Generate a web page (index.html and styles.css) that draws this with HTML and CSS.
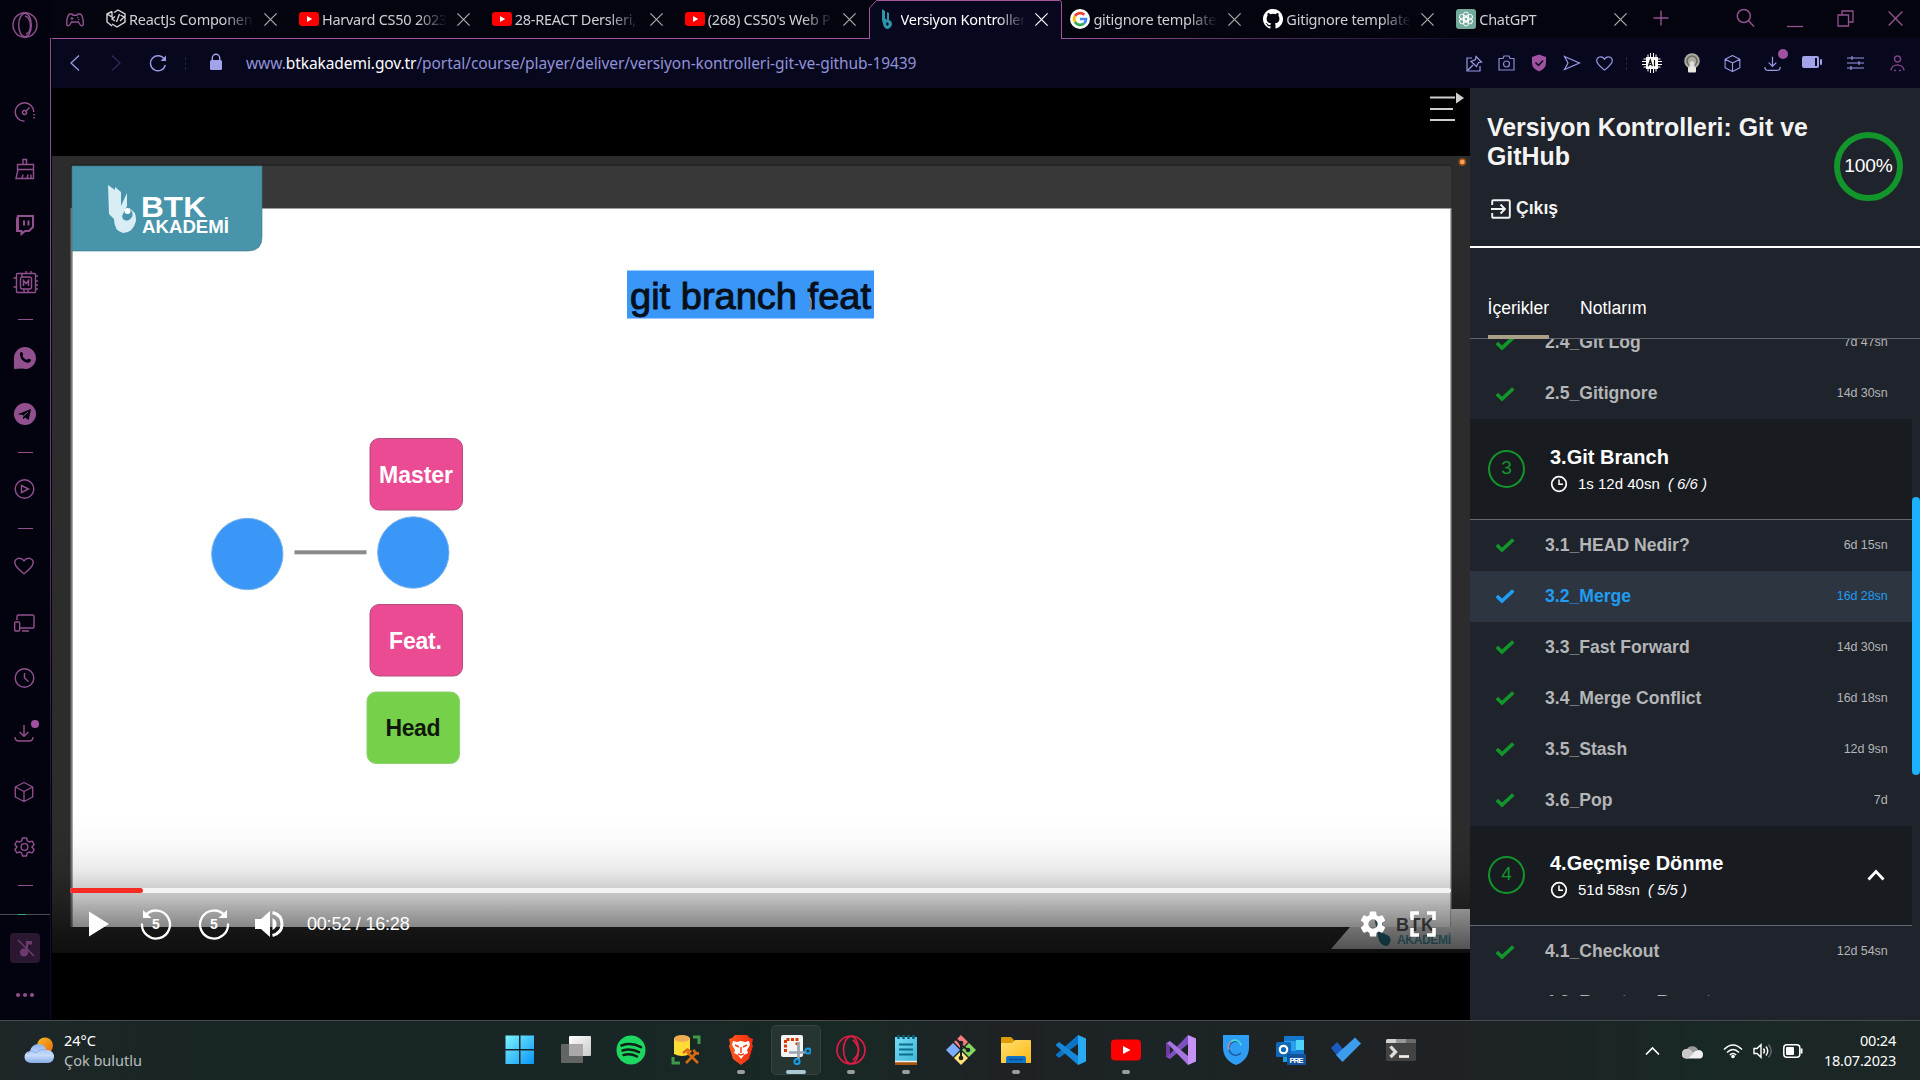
FILE: index.html
```html
<!DOCTYPE html>
<html lang="tr">
<head>
<meta charset="utf-8">
<title>Versiyon Kontrolleri: Git ve GitHub</title>
<link rel="stylesheet" href="styles.css">
</head>
<body>
<svg class="defs" aria-hidden="true">
  <defs>
    <linearGradient id="gWin" x1="0" y1="0" x2="1" y2="1"><stop offset="0" stop-color="#7df3ff"/><stop offset="1" stop-color="#0a95f5"/></linearGradient>
    <linearGradient id="gView" x1="0" y1="0" x2="1" y2="1"><stop offset="0" stop-color="#fff"/><stop offset="1" stop-color="#c9c9c9"/></linearGradient>
    <linearGradient id="gSun" x1="0" y1="0" x2="1" y2="1"><stop offset="0" stop-color="#f7b928"/><stop offset="1" stop-color="#ea6a0c"/></linearGradient>
    <linearGradient id="gCloud" x1="0" y1="0" x2="0" y2="1"><stop offset="0" stop-color="#8fb4f0"/><stop offset=".6" stop-color="#c8dcfa"/><stop offset="1" stop-color="#86a9e6"/></linearGradient>
    <linearGradient id="gBrave" x1="0" y1="0" x2="1" y2="0"><stop offset="0" stop-color="#ff5a22"/><stop offset="1" stop-color="#f02a0c"/></linearGradient>
    <linearGradient id="gFolder" x1="0" y1="0" x2="1" y2="1"><stop offset="0" stop-color="#ffdf70"/><stop offset="1" stop-color="#fdb913"/></linearGradient>
    <linearGradient id="gNote" x1="0" y1="0" x2="1" y2="1"><stop offset="0" stop-color="#77dcf3"/><stop offset="1" stop-color="#3cb4d8"/></linearGradient>
  </defs>
  <symbol id="x" viewBox="0 0 16 16"><path d="M1.5 1.5l13 13M14.500 1.500l-13 13" fill="none" stroke="currentColor" stroke-width="1.3"/></symbol>
  <symbol id="yt" viewBox="0 0 20 20"><rect y="3" width="20" height="14" rx="3.200" fill="#f00"/><path d="M8 7l5.200 3L8 13z" fill="#fff"/></symbol>
  <symbol id="check" viewBox="0 0 20 16"><path d="M1.800 8l5.200 5L18.300 2.500" fill="none" stroke="currentColor" stroke-width="3.700"/></symbol>
  <symbol id="clock" viewBox="0 0 18 18"><circle cx="9" cy="9" r="7.300" fill="none" stroke="#fff" stroke-width="1.700"/><path d="M9 4.500V9.200H13" fill="none" stroke="#fff" stroke-width="1.500"/></symbol>
  <symbol id="cube" viewBox="0 0 20 22"><path d="M10 1.500l8.700 4.500v10L10 20.500 1.300 16V6zM1.300 6L10 10.500 18.700 6M10 10.500v10" fill="none" stroke="currentColor" stroke-width="1.300" stroke-linejoin="round"/></symbol>
  <symbol id="download" viewBox="0 0 20 20"><path d="M10 2v11M5.500 9l4.500 4.300L14.500 9M1 14q0 4 4 4h10q4 0 4-4" fill="none" stroke="currentColor" stroke-width="1.400"/></symbol>
  <symbol id="heart" viewBox="0 0 20 18"><path d="M10 16.800C5 13 .8 9.600.8 5.600.8 1 7 -.6 10 3.800 13 -.6 19.200 1 19.200 5.600c0 4-4.200 7.400-9.200 11.200z" fill="none" stroke="currentColor" stroke-width="1.400"/></symbol>
</svg>

<div class="browser">
  <nav class="sidebar">
    <svg class="ic" width="26" height="30" viewBox="0 0 26 30"><g fill="none" stroke="#93508f" stroke-width="1.400"><ellipse cx="13" cy="15" rx="12" ry="12.300"/><ellipse cx="13" cy="15" rx="6.300" ry="11.800"/><path d="M13 6c7 2 7 16 1 18"/></g></svg>
    <svg class="ic" width="22" height="30" viewBox="0 0 22 30"><g fill="none" stroke="#93508f" stroke-width="1.500"><path d="M10.500 24.300A9.300 9.300 0 1 1 19.800 15"/><circle cx="10.500" cy="15.500" r="2"/><path d="M12 14l3.500-3.500"/><path d="M20 17v5" stroke-dasharray="1.500 1.500"/></g></svg>
    <svg class="ic" width="22" height="30" viewBox="0 0 22 30"><path d="M9 10.500V5.500h3.500v5M3.500 10.500h16v5H3.500zM4 15.500L2 24.500h17.500v-9M8 24.500l1-4M13 24.500l1-4M17 24.500v-4" fill="none" stroke="#93508f" stroke-width="1.400"/></svg>
    <svg class="ic" width="22" height="30" viewBox="0 0 22 30"><path d="M4 6h15v11l-4 4h-4l-3.500 3v-3H3V9z" fill="none" stroke="#93508f" stroke-width="2"/><path d="M3 9v11h2V7z" fill="#93508f"/><path d="M10 10.500v5M14.500 10.500v5" stroke="#93508f" stroke-width="2"/></svg>
    <svg class="ic wide" width="26" height="30" viewBox="0 0 26 30"><g fill="none" stroke="#93508f" stroke-width="1.400"><rect x="3.500" y="5.500" width="19" height="19" rx="1"/><rect x="7.500" y="9" width="11" height="12" rx="2"/><path d="M.5 10h3M.5 19h3M22.500 8h2.500M22.500 13h2.500M22.500 17h2.500M22.500 21h2.500M13 5.500V3M18 5.500V3M11 21v3.500M15 21v3.500M9 9V5.500"/><path d="M10.500 18v-5.500l2.500 3 2.500-3V18" stroke-width="1.500"/></g></svg>
    <i class="dash"></i>
    <svg class="ic" width="22" height="30" viewBox="0 0 22 30"><path d="M11 4a11 11 0 1 1-3 21.600L0 26V15A11 11 0 0 1 11 4z" fill="#93508f"/><path d="M6 10c1-1.600 2.500-1 3 .8.4 1.400-.6 1.700-.3 2.500.8 1.700 2 2.700 3.700 3.400.9.300 1.300-1.300 2.500-.9 2.500.8 2.500 1.500 1.600 2.800-2.500 3.400-11.500-1-10.500-8.600z" fill="#03030f"/></svg>
    <svg class="ic" width="22" height="30" viewBox="0 0 22 30"><circle cx="11" cy="15" r="11" fill="#93508f"/><path d="M3.500 15.200L17 10l-2.300 11-3.700-2.500-2 1.800V16z" fill="#03030f"/><path d="M9 17.500l5-4.500" stroke="#93508f"/></svg>
    <i class="dash"></i>
    <svg class="ic" width="22" height="30" viewBox="0 0 22 30"><circle cx="10.500" cy="15" r="9.300" fill="none" stroke="#93508f" stroke-width="1.400"/><path d="M7.500 11.500v7l7-3.500z" fill="none" stroke="#93508f" stroke-width="1.400"/></svg>
    <i class="dash"></i>
    <span class="ic box"><svg width="20" height="18"><use href="#heart"/></svg></span>
    <svg class="ic" width="22" height="30" viewBox="0 0 22 30"><path d="M3 12V8.500q0-1.500 1.500-1.500h14q1.500 0 1.500 1.500v10.500q0 1-1 1H6M8 23h7" fill="none" stroke="#93508f" stroke-width="1.400"/><rect x=".7" y="14" width="5" height="9" rx="1" fill="none" stroke="#93508f" stroke-width="1.400"/></svg>
    <svg class="ic" width="22" height="30" viewBox="0 0 22 30"><circle cx="10.500" cy="15" r="9.300" fill="none" stroke="#93508f" stroke-width="1.400"/><path d="M10.500 10v5l4 3.500" fill="none" stroke="#93508f" stroke-width="1.400"/></svg>
    <span class="ic box"><svg width="20" height="20"><use href="#download"/></svg><b class="dot"></b></span>
    <span class="ic box"><svg width="20" height="22"><use href="#cube"/></svg></span>
    <svg class="ic" width="22" height="30" viewBox="0 0 22 30"><path d="M8.500 6h4l.8 2.900 2 1.100 2.900-.9 1.900 3.400-2.200 2.500 2.200 2.500-1.900 3.400-2.900-.9-2 1.100-.8 2.900h-4l-.8-2.900-2-1.100-2.900.9L.9 17.500 3 15 .9 12.500l1.900-3.400 2.900.9 2-1.100z" fill="none" stroke="#93508f" stroke-width="1.400" stroke-linejoin="round"/><circle cx="10.500" cy="15" r="3.400" fill="none" stroke="#93508f" stroke-width="1.400"/></svg>
    <i class="dash"></i>
    <i class="divider"></i>
    <span class="muted"><svg width="30" height="30" viewBox="0 0 30 30"><circle cx="14" cy="19.500" r="4" fill="#6d3a6d"/><path d="M16 8h6v3.500h-4v8h-2z" fill="#6d3a6d"/><path d="M8 7l16 16" stroke="#6d3a6d" stroke-width="1.600"/></svg></span>
    <svg class="ic" width="22" height="30" viewBox="0 0 22 30"><g fill="#93508f"><circle cx="4" cy="15" r="2"/><circle cx="11" cy="15" r="2"/><circle cx="18" cy="15" r="2"/></g></svg>
  </nav>
  <i class="edge"></i>

  <div class="window">
    <header class="tabs">
      <span class="pad"><svg width="18" height="14" viewBox="0 0 18 14"><path d="M4 1h2l1 1.200h4L12 1h2c2 0 3.300 5 3.300 9.500 0 3-2.500 3-3.800.2l-1-1.700h-7l-1 1.700C3.200 13.500.7 13.500.7 10.500.7 6 2 1 4 1z" fill="none" stroke="#93508f" stroke-width="1.400"/><path d="M4.500 5.500h3M6 4v3M11 4.500h1.500M12 6.500h1.500" stroke="#93508f" stroke-width="1.200"/></svg></span>
      <div class="tab"><svg width="20" height="20" viewBox="0 0 20 20"><path d="M6 2.500L1 5v8l5 4M1 5l5 3V2.500M8 3.500l4-2.500 7 4v8l-8 5-5-3M9 12l-3-2 3-2.500M10.500 13l3-8M14.500 6l3.500 2-4 4" fill="none" stroke="#d8d8d8" stroke-width="1.400"/></svg><span class="name">ReactJs Components</span><svg class="close" width="15" height="15"><use href="#x"/></svg></div>
      <div class="tab"><svg width="20" height="20"><use href="#yt"/></svg><span class="name">Harvard CS50 2023</span><svg class="close" width="15" height="15"><use href="#x"/></svg></div>
      <div class="tab"><svg width="20" height="20"><use href="#yt"/></svg><span class="name">28-REACT Dersleri, R</span><svg class="close" width="15" height="15"><use href="#x"/></svg></div>
      <div class="tab"><svg width="20" height="20"><use href="#yt"/></svg><span class="name">(268) CS50's Web Pr</span><svg class="close" width="15" height="15"><use href="#x"/></svg></div>
      <div class="tab active"><svg class="shape" width="193" height="39" viewBox="0 0 193 39"><path d="M.5 39V8L7.500.5H190.500q2 0 2 2V39" fill="#07071e" stroke="#a4559d"/></svg><svg width="20" height="20" viewBox="0 0 20 20"><path d="M4 0l3 2v7l2 2V3l2 1v7q3 1 3 4t-4 5q-4 0-5-5l-1-4z" fill="#2f93a9"/><path d="M9 13l2 2-2 2-1-2z" fill="#07071e"/></svg><span class="name">Versiyon Kontrolleri</span><svg class="close" width="15" height="15"><use href="#x"/></svg></div>
      <div class="tab"><svg width="20" height="20" viewBox="0 0 20 20"><circle cx="10" cy="10" r="10" fill="#fff"/><g fill="none" stroke-width="2.700"><path d="M5 7A6 6 0 0 1 14.300 5.700" stroke="#ea4335"/><path d="M5 13A6 6 0 0 1 5 7" stroke="#fbbc05"/><path d="M14 14.500A6 6 0 0 1 5 13" stroke="#34a853"/><path d="M10 10h6q0 3-2 4.500" stroke="#4285f4"/></g></svg><span class="name">gitignore templates</span><svg class="close" width="15" height="15"><use href="#x"/></svg></div>
      <div class="tab"><svg width="20" height="20" viewBox="0 0 16 16"><path fill="#fff" d="M8 0C3.580 0 0 3.580 0 8c0 3.540 2.290 6.530 5.470 7.590.4.070.55-.17.55-.38 0-.19-.01-.82-.01-1.490-2.010.37-2.530-.49-2.690-.94-.09-.23-.48-.94-.82-1.130-.28-.15-.68-.52-.01-.53.630-.01 1.080.58 1.230.820.720 1.210 1.870.870 2.330.660.070-.52.280-.87.510-1.070-1.780-.2-3.640-.89-3.640-3.950 0-.87.310-1.590.820-2.150-.08-.2-.36-1.020.080-2.120 0 0 .67-.21 2.200.820a7.600 7.600 0 0 1 4 0c1.530-1.040 2.200-.82 2.200-.820.440 1.100.160 1.920.080 2.120.510.560.820 1.270.820 2.150 0 3.070-1.870 3.750-3.650 3.950.290.250.540.730.540 1.480 0 1.070-.01 1.930-.01 2.200 0 .21.150.460.550.380A8 8 0 0 0 8 0z"/></svg><span class="name">Gitignore templates</span><svg class="close" width="15" height="15"><use href="#x"/></svg></div>
      <div class="tab"><svg width="20" height="20" viewBox="0 0 20 20"><rect width="20" height="20" rx="3" fill="#74aa9c"/><g fill="none" stroke="#fff" stroke-width=".9"><rect x="7.500" y="3" width="5" height="9" rx="2.500"/><rect x="7.500" y="3" width="5" height="9" rx="2.500" transform="rotate(60 10 10)"/><rect x="7.500" y="3" width="5" height="9" rx="2.500" transform="rotate(120 10 10)"/><rect x="7.500" y="3" width="5" height="9" rx="2.500" transform="rotate(180 10 10)"/><rect x="7.500" y="3" width="5" height="9" rx="2.500" transform="rotate(240 10 10)"/><rect x="7.500" y="3" width="5" height="9" rx="2.500" transform="rotate(300 10 10)"/></g></svg><span class="name">ChatGPT</span><svg class="close" width="15" height="15"><use href="#x"/></svg></div>
      <span class="wc plus"><svg width="16" height="16" viewBox="0 0 16 16"><path d="M8 .5v15M.5 8h15" stroke="#93508f" stroke-width="1.400"/></svg></span>
      <span></span>
      <span class="wc"><svg width="19" height="20" viewBox="0 0 19 20"><circle cx="7.800" cy="8" r="6.500" fill="none" stroke="#93508f" stroke-width="1.500"/><path d="M12.500 12.700l5.500 5.800" stroke="#93508f" stroke-width="1.500"/></svg></span>
      <span class="wc"><svg width="16" height="20" viewBox="0 0 16 20"><path d="M0 18.500h16" stroke="#93508f" stroke-width="1.300"/></svg></span>
      <span class="wc"><svg width="17" height="17" viewBox="0 0 17 17"><path d="M1 5h10.500v11H1zM5 5V1h11v11h-4.500" fill="none" stroke="#93508f" stroke-width="1.300"/></svg></span>
      <span class="wc"><svg class="exit" width="17" height="17"><use href="#x"/></svg></span>
    </header>

    <div class="address">
      <span><svg width="11" height="18" viewBox="0 0 11 18"><path d="M10 1.500L2 9l8 7.500" fill="none" stroke="#9a9ae8" stroke-width="1.300"/></svg></span>
      <span><svg width="11" height="18" viewBox="0 0 11 18"><path d="M1 1.500L9 9l-8 7.500" fill="none" stroke="#2d2b56" stroke-width="1.300"/></svg></span>
      <span><svg width="18" height="18" viewBox="0 0 18 18"><path d="M15.500 5.500A7.500 7.500 0 1 0 16.300 11" fill="none" stroke="#9a9ae8" stroke-width="1.400"/><path d="M17 1.500v5.500h-5.500z" fill="#9a9ae8"/></svg></span>
      <span class="dots"></span>
      <span class="lock"><svg width="14" height="18" viewBox="0 0 14 18"><rect x="1" y="7" width="12" height="10" rx="1.500" fill="#a3a3ea"/><path d="M3.300 8V5a3.700 3.700 0 0 1 7.400 0v3" fill="none" stroke="#a3a3ea" stroke-width="1.400"/></svg></span>
      <p class="url">www.<b>btkakademi.gov.tr</b>/portal/course/player/deliver/versiyon-kontrolleri-git-ve-github-19439</p>
      <div class="tools">
        <span><svg width="17" height="17" viewBox="0 0 17 17"><path d="M6 3H1v13h13v-5M2 15l5-5M10 1.500l5.500 5.500-3 .5-2 4-5.500-5 4.500-2z" fill="none" stroke="#9a9ae8" stroke-width="1.200"/></svg></span>
        <span><svg width="17" height="16" viewBox="0 0 17 16"><path d="M1 3.500h4l1-2.500h5l1 2.500h4V15H1z" fill="none" stroke="#8c8cd6" stroke-width="1.200"/><circle cx="8.500" cy="9" r="3" fill="none" stroke="#8c8cd6" stroke-width="1.200"/></svg></span>
        <span><svg width="16" height="18" viewBox="0 0 16 18"><path d="M8 .5l7 2.500v6q0 5.500-7 8.500-7-3-7-8.500V3z" fill="#a052a0"/><path d="M4.500 8.500l3 3 4.500-5" fill="none" stroke="#07071e" stroke-width="1.500"/></svg></span>
        <span><svg width="18" height="16" viewBox="0 0 18 16"><path d="M1.500 1.500L16.500 8l-15 6.500L5 8z" fill="none" stroke="#9a9ae8" stroke-width="1.200"/></svg></span>
        <span class="lav"><svg width="17" height="17"><use href="#heart"/></svg></span>
        <span class="dots"></span>
        <span><svg width="20" height="20" viewBox="0 0 20 20"><rect x="4" y="4" width="12" height="12" fill="#fff"/><path d="M6 1.500v17M8.500 0v20M11.500 0v20M14 1.500v17M1.500 6h17M0 8.500h20M0 11.500h20M1.500 14h17" stroke="#fff"/><path d="M6.300 13.300L8.300 7l2 6.300M7 11.500h2.600M12.500 7v6.300" fill="none" stroke="#111" stroke-width="1.200"/></svg></span>
        <span><svg width="18" height="20" viewBox="0 0 18 20"><circle cx="9" cy="8" r="7.800" fill="#a9a9a0"/><circle cx="9" cy="8" r="5" fill="none" stroke="#66665f" stroke-width="1.500"/><path d="M6.500 10q2.500-4 5 0v5h-5z" fill="#ddd"/><rect x="5" y="14" width="8" height="5.500" rx="1" fill="#e8e8e0"/></svg></span>
        <span class="lav"><svg width="17" height="19"><use href="#cube"/></svg></span>
        <span class="lav rel"><svg width="17" height="17"><use href="#download"/></svg><b class="dot"></b></span>
        <span class="bat"><svg width="20" height="12" viewBox="0 0 20 12"><rect width="17" height="12" rx="2" fill="#a3a3ea"/><rect x="13" y="2" width="2" height="8" fill="#07071e"/><rect x="18" y="3" width="2" height="6" rx="1" fill="#a3a3ea"/></svg></span>
        <span><svg width="17" height="16" viewBox="0 0 17 16"><path d="M0 3h17M0 8h17M0 13h17M5 1v4M12 6v4M4 11v4" stroke="#9a9ae8" stroke-width="1.100"/></svg></span>
        <span><svg width="15" height="17" viewBox="0 0 15 17"><g fill="none" stroke="#7c4080" stroke-width="1.500"><circle cx="7.500" cy="4" r="3"/><path d="M1 15.500C1.500 8 13.500 8 14 15.500M4 15.500h2M9 15.500h2"/></g></svg></span>
      </div>
    </div>

    <div class="content">
      <main class="player">
        <div class="top"><svg width="40" height="30" viewBox="0 0 40 30"><path d="M2 4.500h25M2 16h23M2 27h25" stroke="#cfcfcf" stroke-width="2.200" transform="translate(0 1)"/><path d="M28 0l8 5.500L28 11z" fill="#cfcfcf" transform="translate(0 .5)"/></svg></div>
        <div class="frame">
          <svg class="slide" width="1418" height="797" viewBox="52 156 1418 797">
            <rect x="52" y="156" width="1418" height="797" fill="#2c2c2c"/>
            <rect x="70" y="164" width="1382" height="4" fill="#262626"/>
            <rect x="72" y="166" width="1379" height="43" fill="#383838"/>
            <rect x="70.500" y="208" width="2" height="719" fill="#777"/>
            <rect x="1450" y="208" width="2" height="719" fill="#666"/>
            <rect x="72.500" y="208.500" width="1378" height="718.500" fill="#fff"/>
            <path d="M72 166h190v71q0 14-14 14H72z" fill="#4794ab" stroke="#3d7587" stroke-opacity=".6"/>
            <circle cx="1462.300" cy="162" r="3.200" fill="#f5a25e" stroke="#8a4718" stroke-width="1.500"/>
            <path d="M108 185l7 5v-3l6 5v14l6-13v14q10 4 9 14-3 12-13 12-9-2-9-14l-5-5z" fill="#d9eef4"/>
            <path d="M127 206l4 4q4 6-2 10-6 2-7-4z" fill="#4794ab"/><circle cx="127.500" cy="211" r="3" fill="#fff"/>
            <text class="brand" x="141" y="216.500" font-size="30" textLength="65" lengthAdjust="spacingAndGlyphs">BTK</text>
            <text class="brand" x="142" y="233" font-size="18" textLength="87" lengthAdjust="spacingAndGlyphs">AKADEMİ</text>
            <rect x="627" y="270.500" width="247" height="48" fill="#3b97f7"/>
            <text x="630" y="309" font-size="37.500" textLength="241" lengthAdjust="spacingAndGlyphs" fill="#08101c" stroke="#08101c" stroke-width="1">git branch feat</text>
            <path d="M809 297q2 1 2 4v6q0 3-2 4" stroke="#9b9b9b" stroke-width="1.500" fill="none"/>
            <g stroke="#b44c7c"><rect x="370" y="438.500" width="92.500" height="71.500" rx="9" fill="#ea4b93"/><rect x="370" y="604.500" width="92.500" height="71.500" rx="9" fill="#ea4b93"/></g>
            <rect x="367" y="692" width="92.500" height="71.500" rx="9" fill="#76d14a" stroke="#8fcf75"/>
            <g fill="#3b97f7" stroke="#79b4ee"><circle cx="247.300" cy="554" r="35.700"/><circle cx="413.300" cy="552.500" r="35.700"/></g>
            <rect x="294.500" y="550.300" width="72" height="4" fill="#8a8a8a"/>
            <g class="label"><text x="416" y="483" textLength="74">Master</text><text x="415.500" y="649" textLength="53">Feat.</text><text class="dark" x="413" y="736" textLength="55">Head</text></g>
            <rect x="52" y="927" width="1418" height="26" fill="#2a2a2a"/>
            <path d="M1331 949l19-22h101v-18h19v40z" fill="#dcdcdc"/>
            <path d="M1374 916l9 5v12l6 3q4 5-2 10-7 0-9-9z" fill="#287488"/>
            <text x="1396" y="931" font-size="18" font-weight="700" fill="#555" textLength="38">BTK</text>
            <text x="1397" y="944" font-size="12" font-weight="700" fill="#4b97a8" textLength="54">AKADEMİ</text>
          </svg>
          <div class="controls">
            <div class="bar"><i class="played"></i></div>
            <div class="buttons">
              <svg width="20" height="26" viewBox="0 0 20 26"><path d="M0 .5L20 13 0 25.500z" fill="#fff"/></svg>
              <svg class="skip" width="32" height="32" viewBox="0 0 32 32"><path d="M5.500 7.200A14 14 0 1 1 2 15.500" fill="none" stroke="#fff" stroke-width="2.300"/><path d="M3 2v8h8.500z" fill="#fff"/><text x="16" y="21">5</text></svg>
              <svg class="skip" width="32" height="32" viewBox="0 0 32 32"><path d="M26.500 7.200A14 14 0 1 0 30 15.500" fill="none" stroke="#fff" stroke-width="2.300"/><path d="M29 2v8h-8.500z" fill="#fff"/><text x="16" y="21">5</text></svg>
              <svg class="vol" width="30" height="28" viewBox="0 0 30 28"><path d="M0 9h6l9-8v26l-9-8H0zM17.500 8q4 2 4 6t-4 6z" fill="#fff"/><path d="M17.500 2.500Q27 5 27 14t-9.500 11.500" fill="none" stroke="#fff" stroke-width="3"/></svg>
              <span class="time">00:52 / 16:28</span>
              <span class="grow"></span>
              <svg width="26" height="28" viewBox="2 2 20 20"><path fill="#fff" fill-rule="evenodd" d="M19.140 12.940c.04-.3.060-.61.060-.94 0-.32-.02-.64-.07-.94l2.030-1.580a.49.490 0 0 0 .12-.61l-1.920-3.320a.49.490 0 0 0-.59-.22l-2.390.96c-.5-.38-1.030-.7-1.620-.94l-.36-2.540a.48.480 0 0 0-.48-.41h-3.840c-.24 0-.43.170-.47.410l-.36 2.540c-.59.240-1.130.570-1.620.940l-2.390-.96a.48.480 0 0 0-.59.220L2.740 8.870c-.12.210-.08.470.12.610l2.030 1.580c-.05.300-.09.630-.09.940s.02.640.070.940l-2.030 1.580a.49.490 0 0 0-.12.610l1.920 3.320c.12.220.370.290.590.220l2.390-.96c.5.380 1.030.7 1.620.940l.36 2.540c.05.240.240.410.480.410h3.840c.24 0 .44-.17.470-.41l.36-2.540c.59-.24 1.130-.56 1.620-.94l2.390.96c.22.080.470 0 .59-.22l1.920-3.320a.48.480 0 0 0-.12-.61zM12 15.600a3.600 3.600 0 1 1 0-7.200 3.600 3.600 0 0 1 0 7.200z"/></svg>
              <svg class="full" width="26" height="26" viewBox="0 0 26 26"><path d="M2 9V2h7M17 2h7v7M24 17v7h-7M9 24H2v-7" fill="none" stroke="#fff" stroke-width="3.600"/></svg>
            </div>
          </div>
        </div>
      </main>

      <aside class="course">
        <div class="head">
          <div class="title">
            <h1>Versiyon Kontrolleri: Git ve GitHub</h1>
            <a class="exitlink"><svg width="20" height="20" viewBox="0 0 20 20"><path d="M1.200 6V2.500Q1.200 1.200 2.500 1.200h15q1.300 0 1.300 1.300v15q0 1.300-1.300 1.300h-15q-1.300 0-1.300-1.300V14M0 10h13M9.500 5.500L14 10l-4.500 4.500" fill="none" stroke="#f2f2f2" stroke-width="1.900"/></svg><span>Çıkış</span></a>
          </div>
          <div class="ring">100%</div>
        </div>
        <div class="nav"><span class="on">İçerikler</span><span>Notlarım</span></div>
        <div class="list">
          <div class="rows">
            <div class="row"><svg width="20" height="16"><use href="#check"/></svg><b>2.4_Git Log</b><em>7d 47sn</em></div>
            <div class="row"><svg width="20" height="16"><use href="#check"/></svg><b>2.5_Gitignore</b><em>14d 30sn</em></div>
            <div class="section"><span class="num">3</span><div><h2>3.Git Branch</h2><p><svg width="18" height="18"><use href="#clock"/></svg>1s 12d 40sn <i>( 6/6 )</i></p></div></div>
            <div class="row"><svg width="20" height="16"><use href="#check"/></svg><b>3.1_HEAD Nedir?</b><em>6d 15sn</em></div>
            <div class="row current"><svg width="20" height="16"><use href="#check"/></svg><b>3.2_Merge</b><em>16d 28sn</em></div>
            <div class="row"><svg width="20" height="16"><use href="#check"/></svg><b>3.3_Fast Forward</b><em>14d 30sn</em></div>
            <div class="row"><svg width="20" height="16"><use href="#check"/></svg><b>3.4_Merge Conflict</b><em>16d 18sn</em></div>
            <div class="row"><svg width="20" height="16"><use href="#check"/></svg><b>3.5_Stash</b><em>12d 9sn</em></div>
            <div class="row"><svg width="20" height="16"><use href="#check"/></svg><b>3.6_Pop</b><em>7d</em></div>
            <div class="section"><span class="num">4</span><div><h2>4.Geçmişe Dönme</h2><p><svg width="18" height="18"><use href="#clock"/></svg>51d 58sn <i>( 5/5 )</i></p></div><svg class="caret" width="18" height="12" viewBox="0 0 18 12"><path d="M1.500 10.500L9 2.500l7.500 8" fill="none" stroke="#fff" stroke-width="2.800"/></svg></div>
            <div class="row"><svg width="20" height="16"><use href="#check"/></svg><b>4.1_Checkout</b><em>12d 54sn</em></div>
            <div class="row"><svg width="20" height="16"><use href="#check"/></svg><b>4.2_Reset ve Revert</b></div>
          </div>
          <div class="track"><i class="thumb"></i></div>
        </div>
      </aside>
    </div>
  </div>
</div>

<footer class="taskbar">
  <div class="weather">
    <svg width="32" height="28" viewBox="0 0 32 28"><circle cx="21" cy="8.500" r="8" fill="url(#gSun)"/><path d="M7 26a6 6 0 0 1-1-12Q8 7 14.500 7q6 0 8 6a6.500 6.500 0 0 1 2 13z" fill="url(#gCloud)"/><path d="M3 17q4-5 9-1 5-5 10-3" fill="none" stroke="#7ba0e4" stroke-opacity=".7"/></svg>
    <p>24°C<br><span>Çok bulutlu</span></p>
  </div>
  <div class="apps">
    <span class="start"><svg width="30" height="30" viewBox="0 0 30 30"><path d="M.5.500H14v13.500H.5zM15.500.500H29v13.500H15.500zM.5 15.500H14V29H.5zM15.500 15.500H29V29H15.500z" fill="url(#gWin)"/></svg></span>
    <span><svg width="30" height="30" viewBox="0 0 30 30"><rect x="8" y="1" width="22" height="20" rx="1" fill="url(#gView)"/><rect y="9" width="22" height="19" rx="1" fill="#6c6c6c" opacity=".9"/><rect x="8" y="9" width="14" height="12" fill="#a9a9a9"/></svg></span>
    <span><svg width="30" height="30" viewBox="0 0 30 30"><circle cx="15" cy="15" r="14.500" fill="#1ed760"/><path d="M5.500 10.500q10-3.500 19.500 1.700M6.500 15.500q8.500-2.700 16.500 1.700M7.500 20q7-2 13.500 1.500" fill="none" stroke="#0f2018" stroke-width="2.500" stroke-linecap="round"/></svg></span>
    <span><svg width="30" height="30" viewBox="0 0 30 30"><path d="M3 3v16q8 4 16 0V3z" fill="#fddd35"/><ellipse cx="11" cy="3.500" rx="8" ry="3.500" fill="#f0ac55"/><path d="M22 2h6v7M2 22v6h7" fill="none" stroke="#3e9a48" stroke-width="3"/><path d="M15 28L24.500 18.500M12 18l4.500-3.500 4 2.500M16 17l11 11M23 14.500q0 4 5 4" fill="none" stroke="#d96a10" stroke-width="2.500"/></svg></span>
    <span class="run"><svg width="26" height="30" viewBox="0 0 26 30"><path d="M7 0h12l3 3 3 1-1 5 1 2-4 13-8 6-8-6L1 11l1-2-1-5 3-1z" fill="url(#gBrave)"/><path d="M5 6l4 1 4-1 4 1 4-1 1 4-3 5 1 3-4 2-3 4-3-4-4-2 1-3-3-5z" fill="#fff"/><path d="M7 10l4 2M19 10l-4 2M13 12v6M10 19l3 1 3-1" stroke="#f5401a" stroke-width="1.500" fill="none"/></svg></span>
    <span class="run open"><svg width="30" height="30" viewBox="0 0 30 30"><rect width="22" height="22" rx="2" fill="#f4f4f4"/><path d="M4.500 17V4.500H16V10" fill="none" stroke="#d83b01" stroke-width="3" stroke-dasharray="3 1.500"/><path d="M17.500 7v17M8 17.500h16" stroke="#9aa4ac" stroke-width="2.700"/><circle cx="16" cy="26.500" r="2.600" fill="none" stroke="#1a9be6" stroke-width="2"/><circle cx="27" cy="16" r="2.600" fill="none" stroke="#1a9be6" stroke-width="2"/></svg></span>
    <span class="run"><svg width="30" height="30" viewBox="0 0 30 30"><g fill="none" stroke="#e01b45" stroke-width="1.700"><circle cx="15" cy="15" r="14"/><ellipse cx="15" cy="15" rx="7.500" ry="13.500"/><path d="M17 5q11 10 0 20"/></g></svg></span>
    <span class="run"><svg width="24" height="30" viewBox="0 0 24 30"><rect x="1" y="2" width="22" height="25" fill="url(#gNote)"/><path d="M1 27h22v3H1z" fill="#a65510"/><path d="M1 26.500h22" stroke="#eee" stroke-width="1.500"/><path d="M5 9.500h14M5 14.500h14M5 19.500h14" stroke="#0d6d8a" stroke-width="2"/><path d="M4.500 0v4M9.500 0v4M14.500 0v4M19.500 0v4" stroke="#0b6078" stroke-width="2.500"/></svg></span>
    <span><svg width="30" height="30" viewBox="0 0 30 30"><path d="M15 0l7 7-7 7-7-7z" fill="#f47c7c"/><path d="M7 8l7 7-7 7-7-7z" fill="#7dadff"/><path d="M23 8l7 7-7 7-7-7z" fill="#85d561"/><path d="M15 16l7 7-7 7-7-7z" fill="#ffe27a"/><path d="M10 4l5 5v14M15 10l7 5" stroke="#1c2224" stroke-width="2" fill="none"/><g fill="#1c2224"><circle cx="15" cy="8" r="2.300"/><circle cx="15" cy="23" r="2.300"/><circle cx="22" cy="15" r="2.300"/></g></svg></span>
    <span class="run"><svg width="30" height="30" viewBox="0 0 30 30"><path d="M0 3q0-1 1-1h9l3 3v5H0z" fill="#dc9c08"/><path d="M0 8h11l3-3h15q1 0 1 1v22H0z" fill="url(#gFolder)"/><path d="M5 28v-5q0-2 2-2h16q2 0 2 2v5z" fill="#0f74c8"/><path d="M8 24.500h14" stroke="#0a4d91" stroke-width="1.500"/></svg></span>
    <span><svg width="30" height="30" viewBox="0 0 30 30"><path d="M22 0l8 3.500v23L22 30z" fill="#29a9f2"/><path d="M22 0v9L3 23l-3-2.500v-1z" fill="#0b74c4"/><path d="M22 30v-9L3 7 0 9.500v1z" fill="#1687d8"/></svg></span>
    <span class="run"><svg width="30" height="30" viewBox="0 0 30 30"><rect y="4.500" width="30" height="21" rx="4" fill="#f00"/><path d="M12 11l7.500 4-7.500 4z" fill="#fff"/></svg></span>
    <span><svg width="30" height="30" viewBox="0 0 30 30"><path d="M22 0l8 3.500v23L22 30z" fill="#c792f5"/><path d="M0 8l4-2v18l-4-2z" fill="#6c3ca0"/><path d="M22 0v9L4 24l-3-2z" fill="#7e4fc0"/><path d="M22 30v-9L4 6 1 8z" fill="#a673e0"/></svg></span>
    <span><svg width="26" height="30" viewBox="0 0 26 30"><path d="M0 0h26v12q0 13-13 18Q0 25 0 12z" fill="#2e9df4"/><path d="M18 18a7 7 0 1 1-2-11" fill="none" stroke="#1f5fa6" stroke-width="1.700"/><path d="M8 6.500q7-4 10.500 4" fill="none" stroke="#46e0d8" stroke-width="1.700"/><path d="M8 6.500q-4 4-2 8" fill="none" stroke="#b48ba8" stroke-width="1.700"/></svg></span>
    <span><svg width="30" height="30" viewBox="0 0 30 30"><rect x="8" y="1" width="20" height="20" rx="1" fill="#1277cd"/><path d="M8 6h12v10H8z" fill="#2aa0ea"/><path d="M20 5h8v10h-8z" fill="#50d3f8"/><rect x="7" y="20" width="14" height="7" fill="#1a9fd8"/><rect y="7" width="15" height="15" rx="1.500" fill="#0f67bb"/><circle cx="7.500" cy="14.500" r="3.700" fill="none" stroke="#fff" stroke-width="2.200"/><rect x="11" y="19" width="19" height="11" fill="#12529a"/><text class="pre" x="20.500" y="27.500" textLength="14">PRE</text></svg></span>
    <span><svg width="30" height="30" viewBox="0 0 30 30"><path d="M0 13l6-6 7 8-5 8z" fill="#1b5cc0"/><path d="M5 20L24 2.500l6 6L11.500 27z" fill="#3d9cec"/></svg></span>
    <span><svg width="30" height="30" viewBox="0 0 30 30"><rect y="4" width="30" height="22" rx="1.500" fill="#434343"/><path d="M0 8V5.500Q0 4 1.500 4H10v4z" fill="#d2d2d2"/><path d="M10 4h10v4H10z" fill="#989898"/><path d="M20 4h8.500Q30 4 30 5.500V8H20z" fill="#6c6c6c"/><path d="M4.500 11.500l5 5.500-5 5" fill="none" stroke="#ddd" stroke-width="3.300"/><path d="M13 21.500h10" stroke="#eee" stroke-width="2.700"/></svg></span>
  </div>
  <div class="tray">
    <svg width="15" height="10" viewBox="0 0 15 10"><path d="M1 8.500L7.500 2 14 8.500" fill="none" stroke="#fff" stroke-width="1.700"/></svg>
    <svg width="21" height="16" viewBox="0 0 21 16"><path d="M4 8a6.500 6.500 0 0 1 12.500 0z" fill="#9a9a9a"/><path d="M5 15.500Q0 15.500 0 11t5-5q3 0 5 3l7-2q4 .5 4 4.500t-3.500 4z" fill="#f0f0f0"/><path d="M0 11q0-5 5-5 4 0 7 4l-6 5.500H5q-5 0-5-4.500z" fill="#c8c8c8"/></svg>
    <svg width="20" height="16" viewBox="0 0 20 16"><g fill="none" stroke="#fff" stroke-width="1.500"><path d="M1 6.500Q10-2.500 19 6.500M4 9.500q6-6 12 0M6.800 12q3.200-3 6.400 0"/></g><circle cx="10" cy="13.500" r="1.800" fill="#fff"/></svg>
    <svg width="20" height="16" viewBox="0 0 20 16"><g fill="none" stroke="#fff" stroke-width="1.400"><path d="M1 5.500h3L8 1.700v12.600L4 10.500H1zM10.500 5.500q2 2.500 0 5M13 3.500q3.500 4.500 0 9"/><path d="M15.500 1.500q5.500 6.500 0 13" stroke="#667"/></g></svg>
    <svg width="20" height="14" viewBox="0 0 20 14"><rect x=".8" y=".8" width="16" height="12.400" rx="3" fill="none" stroke="#fff" stroke-width="1.500"/><rect x="3" y="3" width="8" height="8" rx="1" fill="#fff"/><path d="M18.500 4.500v5" stroke="#fff" stroke-width="2"/></svg>
    <p>00:24<br>18.07.2023</p>
  </div>
</footer>
</body>
</html>
```
FILE: styles.css
```css
* { box-sizing: border-box; }
body { margin: 0; width: 1920px; height: 1080px; overflow: hidden; display: flex; flex-direction: column; background: #000; font-family: "Liberation Sans", Arial, sans-serif; }
p, h1, h2 { margin: 0; }
svg { display: block; flex: none; }
.defs { position: absolute; width: 0; height: 0; }

.browser { display: flex; height: 1020px; }
.window { flex: 1; min-width: 0; display: flex; flex-direction: column; }

/* sidebar */
.sidebar { width: 50px; display: grid; grid-template-rows: 40px 87px 57px 56px 58px 22px 53px 56px 24px 51px 25px 52px 57px 55px 55px 59px 55px 24px 29px 48px 47px; align-items: end; justify-items: center; background: #03030f; color: #93508f; }
.sidebar .wide { margin-left: 2px; }
.box { width: 22px; height: 30px; display: flex; align-items: center; position: relative; }
.dot { position: absolute; border-radius: 50%; background: #a052a0; width: 8px; height: 8px; top: 2px; right: -3px; }
.dash { width: 15px; height: 1px; margin-left: 1px; background: #93508f; }
.divider { width: 50px; height: 1px; background: linear-gradient(90deg, #4a4b50 18px, #2ab57d 18px 26px, #4a4b50 26px); }
.muted { width: 30px; height: 30px; border-radius: 4px; background: #2a1731; }
.edge { width: 2px; background: linear-gradient(#93508f, #6c3a6c 450px, #1a1024 800px, #0a0818) 0 38px / 1px 100% no-repeat #03030f; }

/* tab strip */
.tabs { height: 39px; display: grid; grid-template-columns: 45px repeat(8, 192.9px) 42px 1fr repeat(4, 50px); align-items: center; background: linear-gradient(90deg, #a4559d 1000px, #46284e 1250px, #07071e 1440px) 0 38px / 100% 1px no-repeat #04040f; }
.tabs > span { display: flex; justify-content: center; }
.wc.plus { padding-bottom: 4px; }
.wc { padding-bottom: 3px; color: #93508f; }
.tab { height: 39px; padding: 0 12px 1px 9px; display: flex; align-items: center; position: relative; color: #cfcfd6; font: 14.500px/20px "Noto Sans", "Open Sans", sans-serif; letter-spacing: -.25px; }
.tab > svg { position: relative; }
.name { flex: 1; margin-left: 3px; overflow: hidden; white-space: nowrap; position: relative; -webkit-mask: linear-gradient(90deg, #000 95px, transparent 125px); mask: linear-gradient(90deg, #000 95px, transparent 125px); }
.tab .close { margin-left: 7px; color: #aaa; }
.tab .shape { position: absolute; left: 0; top: 0; }
.tab.active, .tab.active .close { color: #fff; }

/* address bar */
.address { height: 49px; padding-bottom: 1px; display: grid; grid-template-columns: 45px 38px 46px 8px 53px 1fr 462px; align-items: center; background: #07071e; }
.address > span, .tools > span { display: flex; justify-content: center; align-items: center; }
.address > .lock { padding-bottom: 2px; }
.address > .dots, .tools > .dots { justify-self: center; width: 1px; height: 13px; background: repeating-linear-gradient(#23235a 0 3px, transparent 3px 5px); }
.url { margin-left: 4px; padding-bottom: 1px; color: #9292d8; font: 15.500px/22px "Noto Sans", "Open Sans", sans-serif; letter-spacing: -.08px; white-space: nowrap; }
.url b { color: #fff; font-weight: 400; }
.tools { display: grid; grid-template-columns: repeat(5, 32.500px) 11.500px repeat(5, 40px) 46px 38px; align-items: center; }
.lav { color: #9a9ae8; }
.rel { position: relative; }
.rel .dot { width: 10px; height: 10px; right: 4px; top: -6px; }
.tools > .bat { padding-bottom: 2px; }

/* player */
.content { flex: 1; display: flex; min-height: 0; }
.player { width: 1418px; background: #000; }
.top { height: 68px; padding: 4px 2px 0; display: flex; justify-content: flex-end; }
.frame { position: relative; height: 797px; }
.slide text { font-family: "Liberation Sans", Arial, sans-serif; }
.slide .brand { font-weight: 700; fill: #fff; }
.slide .label text { font-weight: 700; font-size: 23px; text-anchor: middle; fill: #fff; }
.slide .label .dark { fill: #10180c; }
.controls { position: absolute; inset: auto 0 0 0; height: 150px; padding: 85px 19px 0 18px; background: linear-gradient(transparent 10px, rgba(0,0,0,.02) 40px, rgba(0,0,0,.08) 67px, rgba(0,0,0,.22) 90px, rgba(0,0,0,.46) 122px, rgba(0,0,0,.65)); }
.bar { height: 5px; border-radius: 3px; background: rgba(245,245,245,.95); }
.played { display: block; width: 73px; height: 5px; border-radius: 3px; background: #f52b24; }
.buttons { height: 62px; padding: 0 15px 0 19px; display: flex; align-items: center; }
.skip { margin-left: 31px; }
.skip + .skip { margin-left: 26px; }
.skip text { font: 700 14px "Liberation Sans", Arial, sans-serif; fill: #fff; text-anchor: middle; }
.vol { margin-left: 25px; }
.time { margin-left: 22px; color: #fff; font-size: 18px; letter-spacing: -.2px; }
.grow { flex: 1; }
.full { margin-left: 24px; }

/* course panel */
.course { width: 450px; display: flex; flex-direction: column; background: #1f232b; color: #f4f4f4; }
.head { height: 160px; padding: 25px 17px 0 17px; display: flex; border-bottom: 2px solid #fff; }
.title { flex: 1; }
h1 { width: 335px; font-size: 24.900px; line-height: 29px; }
.exitlink { display: flex; gap: 5px; margin: 28px 0 0 4px; font-size: 17.600px; font-weight: 700; line-height: 18px; }
.ring { width: 69px; height: 69px; margin-top: 19px; border: 6.500px solid #12952a; border-radius: 50%; display: flex; align-items: center; justify-content: center; font-size: 19.200px; letter-spacing: -.2px; padding-bottom: 1px; color: #fff; }
.nav { height: 91px; padding: 0 18px 0 17.500px; display: flex; gap: 31px; border-bottom: 1px solid #62656b; font-size: 17.600px; line-height: 20px; color: #fff; align-items: flex-end; }
.nav span { height: 40px; }
.nav .on { border-bottom: 4px solid #aaa088; margin-bottom: -1px; height: 41px; }
.list { height: 657px; display: flex; overflow: hidden; }
.rows { width: 442px; margin-top: -22px; }
.row { height: 51px; padding: 0 24.500px 0 25px; display: flex; align-items: center; color: #12952a; }
.row b { flex: 1; margin-left: 30px; color: #b3b5b7; font-size: 17.600px; }
.row em { font-style: normal; font-size: 12.500px; color: #b3b5b7; padding-bottom: 1px; letter-spacing: -.1px; }
.row.current { background: #2d3640; color: #209cf2; }
.row.current b, .row.current em { color: inherit; }
.section { height: 100.600px; padding: 0 27px 0 18px; display: flex; align-items: center; background: #181b1f; border-bottom: 1px solid #62656b; }
.section > div { flex: 1; margin-left: 25px; padding-top: 4px; }
.num { width: 37px; height: 38px; border: 2px solid #12952a; border-radius: 50%; color: #12952a; font-size: 19.200px; line-height: 31px; text-align: center; }
h2 { font-size: 20px; line-height: 24px; margin-top: -4px; color: #fff; }
.section p { display: flex; align-items: center; margin-top: 6px; font-size: 15px; line-height: 18px; color: #fff; white-space: pre; }
.section p svg { margin-right: 10px; }
.section p i { margin-left: 4px; }
.track { width: 8px; padding-top: 158px; }
.thumb { display: block; height: 278px; border-radius: 4px; background: #1cb1ff; }

/* taskbar */
.taskbar { height: 60px; display: flex; border-top: 1px solid #474b4c; background: linear-gradient(90deg, #1e2628, #182625 220px, #182825 850px, #1f2225 1000px, #1c2425 1150px, #1f2225 1450px, #182826 1700px, #1c2625); color: #fff; font: 14.500px/20px "Noto Sans", "Open Sans", sans-serif; }
.weather { width: 495.500px; padding: 9px 0 0 24px; display: flex; }
.weather svg { margin-top: 7px; }
.weather p { margin-left: 8px; }
.weather p span { color: #b9bdbd; }
.apps { display: flex; align-items: center; padding-bottom: 1px; }
.apps span { width: 50px; height: 50px; margin-right: 5px; display: flex; align-items: center; justify-content: center; position: relative; }
.apps .start { left: -1px; }
.run::after { content: ""; position: absolute; bottom: 1px; width: 8px; height: 4px; border-radius: 2px; background: #9a9d9d; }
.apps .open { background: #263432; border: 1px solid #344240; border-radius: 5px; }
.open::after { bottom: 0; width: 20px; background: #a9c8d2; }
.pre { font: 700 8px "Liberation Sans", Arial, sans-serif; fill: #fff; text-anchor: middle; }
.tray { margin-left: auto; padding-right: 24px; display: flex; align-items: center; }
.tray svg:nth-child(2) { margin-left: 22px; }
.tray svg:nth-child(3) { margin-left: 20px; }
.tray svg:nth-child(4) { margin-left: 10px; }
.tray svg:nth-child(5) { margin-left: 10px; }
.tray p { width: 93px; padding-bottom: 2px; text-align: right; letter-spacing: -.2px; white-space: nowrap; }
```
